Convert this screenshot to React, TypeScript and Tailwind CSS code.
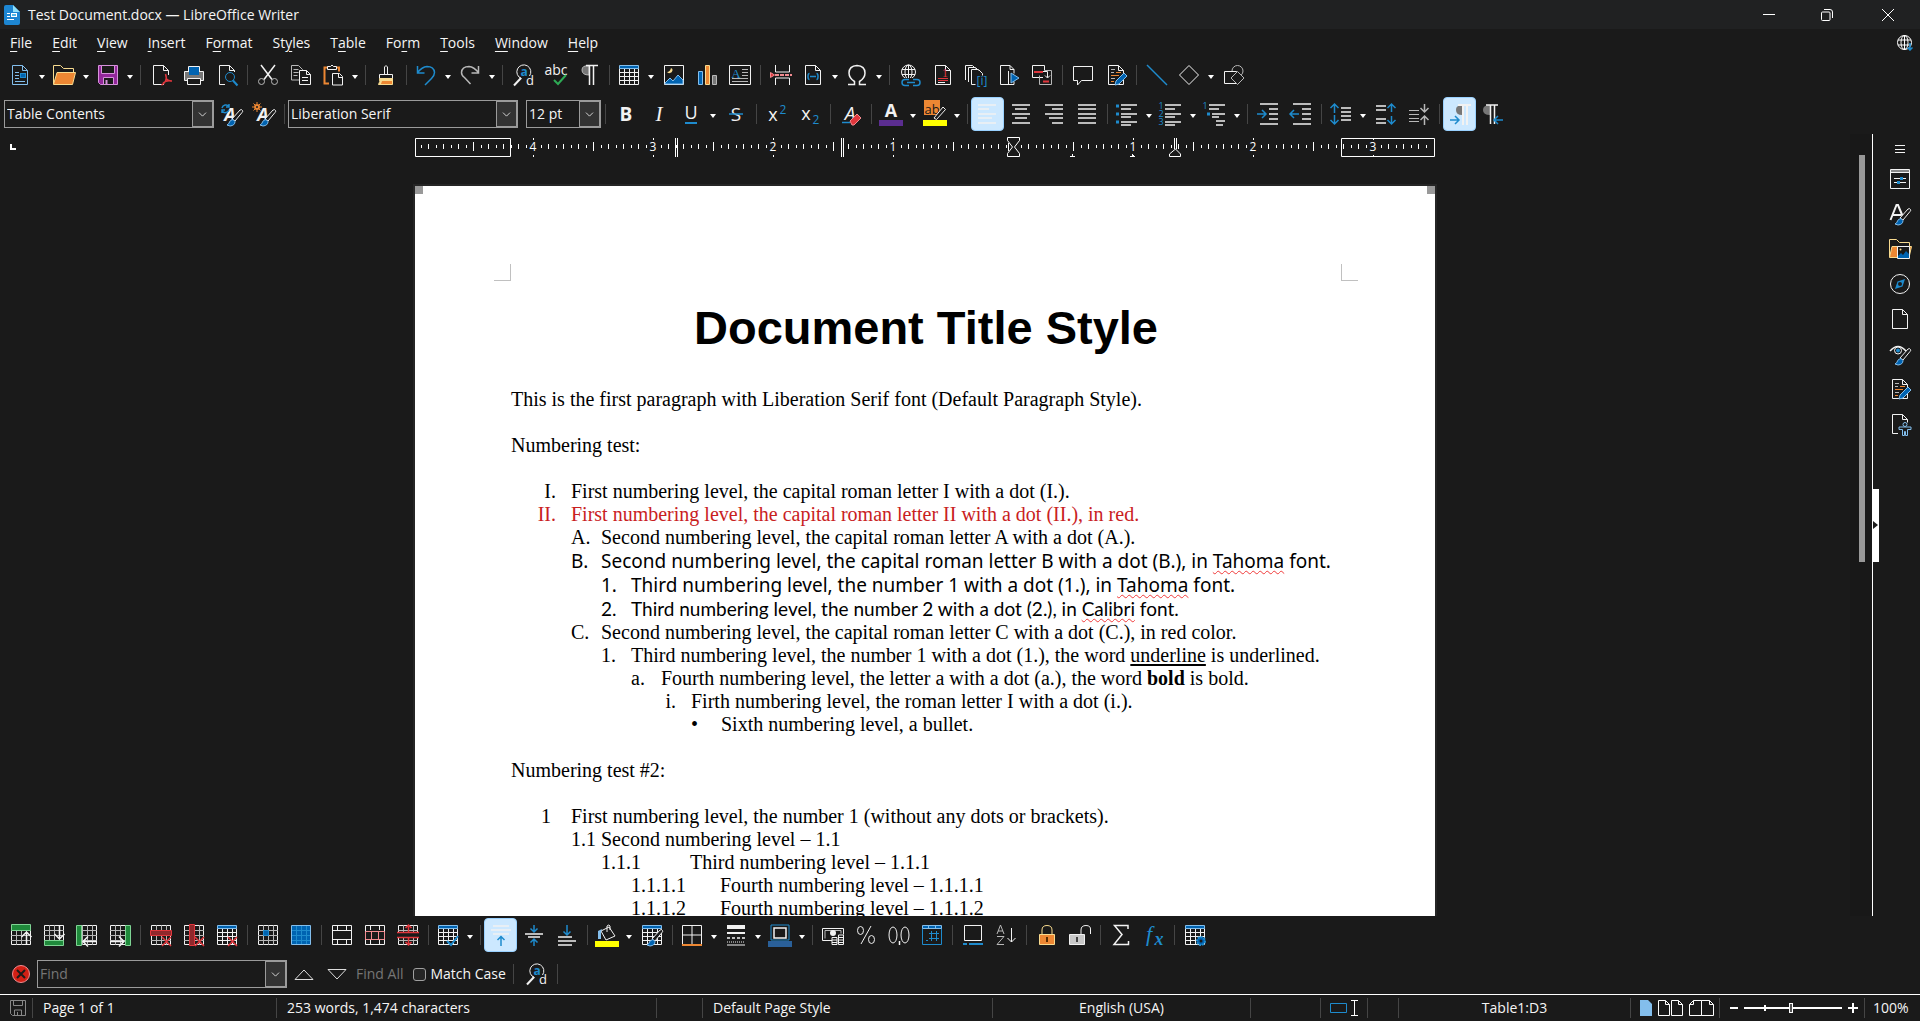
import type { ReactNode } from 'react';
import { ChevronDown } from 'lucide-react';
import clsx from 'clsx';

const W = '#f2f2f2';
const G = '#b8b8b8';
const BLUE = '#1e8bcd';
const DEEP = '#0063b1';
const SKY = '#83beec';
const ORANGE = '#ed8733';
const CREAM = '#f8db8f';
const RED = '#e0363c';
const PINK = '#f28b90';
const BG = '#1a1a1a';

// ---------- shared icon pieces ----------

const Doc = ({ c = W }: { c?: string }) => (
  <>
    <path d="M4.5 2.5h10l5 5v14h-15z" stroke={c} />
    <path d="M14.5 2.5v5h5" stroke={c} />
  </>
);

const Cells = () => (
  <>
    <path d="M2.5 2.5h19v19h-19z" stroke={W} />
    <path d="M2 7.5h20M2 12.5h20M2 17.5h20M7.5 2v20M12.5 2v20M17.5 2v20" stroke={G} />
  </>
);

const HeadTable = () => (
  <>
    <path d="M2.5 5.5h19v16h-19z" stroke={W} />
    <path d="M2 9.5h20M2 13.5h20M2 17.5h20M7.5 6v16M12.5 6v16M17.5 6v16" stroke={W} />
    <path d="M2.5 2.5h19v3h-19z" fill={DEEP} stroke={SKY} />
  </>
);

const Cross = () => <path d="M13 14l9 9M22 14l-9 9" stroke={RED} strokeWidth="1.5" />;

const Brush = () => (
  <>
    <path d="M12 16L20 7q2-1 2.5 0.5t-.5 2L15 18z" fill={BG} stroke={W} />
    <path d="M7 22q2-1 2.5-3t3.5-2.5l2 2q0 4-5 4.500z" fill={DEEP} stroke={SKY} />
  </>
);

const Pencil = () => <path d="M11 22l1-4 8-8 3 3-8 8z" fill={DEEP} stroke={SKY} />;

type TxtProps = { x: number; y: number; s: number; c?: string; b?: boolean; i?: boolean; serif?: boolean; children: ReactNode };

const Txt = ({ x, y, s, c = W, b, i, serif, children }: TxtProps) => (
  <text
    x={x}
    y={y}
    fontSize={s}
    fill={c}
    stroke="none"
    textAnchor="middle"
    fontWeight={b ? 700 : 400}
    fontStyle={i ? 'italic' : 'normal'}
    fontFamily={serif ? '"Liberation Serif", serif' : '"Open Sans", sans-serif'}
  >
    {children}
  </text>
);

const Lines = ({ rows }: { rows: [number, number, number][] }) => (
  <>
    {rows.map(([y, a, b]) => (
      <path key={y} d={`M${a} ${y}h${b - a}`} stroke={W} strokeWidth="1.5" />
    ))}
  </>
);

const icons: Record<string, ReactNode> = {
  new: (
    <>
      <Doc c={SKY} />
      <path d="M7 9.5h4M7 12.5h4M7 15.5h4M7 18.5h10" stroke={SKY} />
      <rect x="12.5" y="10.5" width="5" height="4" fill={DEEP} stroke={BLUE} />
    </>
  ),
  open: (
    <>
      <path d="M1.5 21v-18.5h7l3 3h10v4" stroke={CREAM} />
      <path d="M1.5 21.5L5 9.5h18.5L20.5 21.5z" fill={ORANGE} stroke={CREAM} />
    </>
  ),
  save: (
    <>
      <path d="M2.5 2.5h19v19h-17l-2-2z" fill="#93279b" stroke="#d692db" />
      <path d="M5.5 2.5h13v8h-13z" fill={BG} stroke="#d692db" />
      <path d="M7.5 14.5h10v7h-10z" fill={BG} stroke="#d692db" />
      <path d="M10.5 17v4.5" stroke="#d692db" strokeWidth="2" />
    </>
  ),
  pdf: (
    <>
      <Doc />
      <path d="M15 9v13h8V9z" fill={BG} />
      <path d="M19.5 8v4" stroke={W} />
      <path d="M16.5 11q1.5 4 0 7t-4 4M17 15q1 3 6 3M14 20q4-3 8-2" stroke={RED} strokeWidth="1.5" />
    </>
  ),
  print: (
    <>
      <path d="M6.5 10.5v-7h11v7" fill={DEEP} stroke={W} />
      <path d="M2.5 8.5h19v9h-19z" fill="#777" stroke={W} />
      <path d="M7 7h10v5H7z" fill={DEEP} />
      <path d="M5.5 15.5h13v6h-13z" fill={BG} stroke={W} />
    </>
  ),
  preview: (
    <>
      <Doc />
      <path d="M10 9h14v14h-14z" fill={BG} />
      <circle cx="15" cy="14" r="4.5" stroke={BLUE} />
      <path d="M18 17.5l4.5 5" stroke={BLUE} strokeWidth="2" />
    </>
  ),
  cut: (
    <>
      <path d="M5 2l11 14.5M19 2L8 16.5" stroke={W} strokeWidth="1.5" />
      <circle cx="5.5" cy="18.5" r="3" stroke={G} />
      <circle cx="18.5" cy="18.5" r="3" stroke={G} />
    </>
  ),
  copy: (
    <>
      <path d="M2.5 2.5h7l4 4v10.5h-11z" stroke={G} />
      <path d="M4.5 6.5h5M4.5 9.5h5M4.5 12.5h4" stroke={G} />
      <path d="M10.5 7.5h7l4 4v10h-11z" fill={BG} stroke={W} />
      <path d="M17.5 7.5v4h4M13 14.5h6M13 17.5h6" stroke={W} />
    </>
  ),
  paste: (
    <>
      <path d="M8 20.5H3.5v-16H18v4" stroke={ORANGE} strokeWidth="2" />
      <path d="M6.5 6.5v-3h3q1.5-3 3 0h3v3z" fill={BG} stroke={W} />
      <path d="M11.5 10.5h7l3 3v8.5h-10z" fill={BG} stroke={W} />
      <path d="M17.5 10.5v4h4" stroke={W} />
    </>
  ),
  clone: (
    <>
      <path d="M10.5 11.5V4q1.5-3 3 0v7.5" stroke={W} />
      <path d="M5.5 11.5h13v4h-13z" stroke={W} />
      <path d="M5.5 15.5h13v6h-14q2-3 1-6z" fill={CREAM} stroke={CREAM} />
      <path d="M8 18h10v3h-11z" fill={ORANGE} />
    </>
  ),
  undo: <path d="M3.5 3v7h7M3.5 9.5Q8 4 13 3.5q7 0 7.5 6 0 3-3 6L11 22" stroke={BLUE} strokeWidth="1.5" />,
  redo: <path d="M20.5 3v7h-7M20.5 9.5Q16 4 11 3.5q-7 0-7.5 6 0 3 3 5l6 6.5" stroke={G} strokeWidth="1.5" />,
  find: (
    <>
      <path d="M18.5 13a7 7 0 1 0-8 2.500" stroke={W} />
      <path d="M10 15l-7 7.5" stroke={W} strokeWidth="2" />
      <Txt x={13} y={13} s={12} c={BLUE} b>a</Txt>
      <Txt x={19} y={22} s={13}>d</Txt>
    </>
  ),
  spell: (
    <>
      <Txt x={12} y={12} s={14}>abc</Txt>
      <path d="M10 17l4 4 8-9" stroke="#2eaa55" strokeWidth="2" />
    </>
  ),
  marks: (
    <>
      <path d="M12 3v9q-7 0-7-5t7-4z" fill="#777" stroke={G} />
      <path d="M9 2.5h12M12.5 3v19M16.5 3v19" stroke={W} strokeWidth="1.5" />
    </>
  ),
  table: <HeadTable />,
  image: (
    <>
      <path d="M2.5 2.5h19v19h-19z" stroke={W} />
      <path d="M9 5q-1 4-4 4 1 1.5 3 1t2.500-2.500T9 5z" fill={CREAM} />
      <path d="M3 20l5-5 3 3 5-6 5 5v4H3z" fill={DEEP} stroke={SKY} />
    </>
  ),
  chart: (
    <>
      <path d="M3.5 8.5h4v13h-4z" fill={DEEP} stroke={SKY} />
      <path d="M10.5 2.5h4v19h-4z" fill={ORANGE} stroke={CREAM} />
      <path d="M17.5 12.5h4v9h-4z" fill="#777" stroke={G} />
    </>
  ),
  textbox: (
    <>
      <path d="M1.5 2.5h21v19h-21z" stroke={W} />
      <Txt x={8} y={15} s={13} c={BLUE} serif>A</Txt>
      <path d="M14 6.5h6M14 9.5h6M14 12.5h6M4 15.5h16M4 18.5h16" stroke={G} />
    </>
  ),
  pagebreak: (
    <>
      <path d="M6.5 2v7h14V2M6.5 22v-7h14v7" stroke={W} />
      <path d="M6 12h17" stroke={PINK} strokeWidth="2" strokeDasharray="4 1" />
      <path d="M1.5 9.5v5l4-2.5z" fill={RED} stroke={PINK} />
    </>
  ),
  field: (
    <>
      <Doc />
      <path d="M8.5 10.5q-1.5 0-1.5 3t1.5 3M15.5 10.5q1.5 0 1.5 3t-1.5 3M9 13.5h6" stroke={BLUE} strokeWidth="1.5" />
    </>
  ),
  omega: <path d="M3 21.5h6.5v-3Q4 15 4 10q0-7 8-7.5 8 .5 8 7.500 0 5-5.5 8.500v3H21" stroke={W} strokeWidth="1.5" />,
  link: (
    <>
      <circle cx="10.5" cy="9" r="7" stroke={W} />
      <path d="M4 6.5h13M4 11.5h13M10.5 2v14" stroke={W} />
      <ellipse cx="10.5" cy="9" rx="3.5" ry="7" stroke={W} />
      <path d="M3 15h20v8H3z" fill={BG} />
      <path d="M11 16.5H7q-3 0-3 3t3 3h4M15 16.5h4q3 0 3 3t-3 3h-4M9 19.5h8" stroke={BLUE} strokeWidth="1.5" />
    </>
  ),
  footnote: (
    <>
      <Doc />
      <Txt x={14} y={14} s={12} c={RED} serif>1</Txt>
      <path d="M7 15.5h10M7 17.5h10" stroke={RED} />
      <path d="M7 19.5h7" stroke={W} />
    </>
  ),
  endnote: (
    <>
      <path d="M1.5 17V2.5h7l3 3M4.5 19V4.5h7l3 3M7.5 21.5v-15h7l4 4v2M7.5 21.5h4" stroke={W} />
      <Txt x={18} y={22} s={12} c={BLUE}>[i]</Txt>
    </>
  ),
  bookmark: (
    <>
      <path d="M13 2.5H3.5v19H17v-3M13 2.5l4 4v4M13 2.5v4h4" stroke={W} />
      <path d="M11.5 8v14" stroke={W} />
      <path d="M14 10l8 5-8 5z" fill={DEEP} stroke={SKY} />
    </>
  ),
  crossref: (
    <>
      <path d="M13 14.5H2.5v-12h12v5" stroke={W} />
      <path d="M9.5 12.5v9h12v-14h-7" stroke={G} />
      <path d="M4 9h9" stroke={RED} strokeWidth="2" />
      <path d="M13 8.5h4.5v6M15 12.5l2.5 2.500 2.500-2.500" stroke={W} />
      <path d="M13 18.5h6" stroke={RED} strokeWidth="2" />
    </>
  ),
  comment: <path d="M2.5 3.5h19v14h-11l-4 4.5v-4.5h-4z" stroke={W} />,
  track: (
    <>
      <Doc />
      <path d="M7 6.5h4M7 9.5h3M7 15.5h4" stroke={G} />
      <path d="M12 9.5h5M7 12.5h8M7 18.5h3" stroke={ORANGE} />
      <Pencil />
    </>
  ),
  line: <path d="M2 2l20 20" stroke={BLUE} strokeWidth="1.5" />,
  diamond: <path d="M12 2.5l9.5 9.5-9.5 9.5L2.5 12z" stroke={W} />,
  shapes: (
    <>
      <circle cx="15.5" cy="8" r="5.5" stroke={G} />
      <path d="M2.5 8.5h12v12h-12z" fill={BG} stroke={W} />
      <path d="M15.5 8.5l6.5 6.5-6.5 6.5-6.5-6.5z" fill={BG} stroke={G} />
    </>
  ),
  updstyle: (
    <>
      <Txt x={11} y={19} s={18} b i>A</Txt>
      <path d="M10 4.500A4 4 0 0 0 3 6M10 2v3H7M3 9a4 4 0 0 0 7-1M3 11V8h3" stroke={BLUE} strokeWidth="1.5" />
      <g transform="translate(1 1)">
        <Brush />
      </g>
    </>
  ),
  newstyle: (
    <>
      <Txt x={11} y={19} s={18} b i>A</Txt>
      <circle cx="5" cy="5" r="2" stroke={ORANGE} strokeWidth="2" />
      <path d="M5 0v2M5 8v2M0 5h2M8 5h2M1.5 1.5l1.5 1.5M7 7l1.5 1.5M8.5 1.5L7 3M3 7L1.5 8.500" stroke={ORANGE} />
      <g transform="translate(1 1)">
        <Brush />
      </g>
    </>
  ),
  bold: <Txt x={12} y={19} s={19} b>B</Txt>,
  italic: <Txt x={12} y={19} s={21} i serif>I</Txt>,
  underline: (
    <>
      <Txt x={12} y={17} s={18}>U</Txt>
      <path d="M6 21h12" stroke={BLUE} strokeWidth="2" />
    </>
  ),
  strike: (
    <>
      <Txt x={12} y={19} s={19}>S</Txt>
      <path d="M5 12h14" stroke={BLUE} strokeWidth="1.5" />
    </>
  ),
  sup: (
    <>
      <Txt x={8} y={19} s={18}>x</Txt>
      <Txt x={18} y={12} s={12} c={BLUE}>2</Txt>
    </>
  ),
  sub: (
    <>
      <Txt x={8} y={18} s={18}>x</Txt>
      <Txt x={18} y={22} s={12} c={BLUE}>2</Txt>
    </>
  ),
  clear: (
    <>
      <Txt x={11} y={18} s={19} i>A</Txt>
      <path d="M3 20.5h8" stroke={BLUE} strokeWidth="1.5" />
      <path d="M11 19l7-7 4 4-7 7h-2z" fill={RED} stroke={PINK} />
    </>
  ),
  fontcolor: (
    <>
      <Txt x={12} y={15} s={18} b>A</Txt>
      <path d="M0 18h24v6H0z" fill="#5b2d90" />
    </>
  ),
  highlight: (
    <>
      <path d="M1-2h16v15H1z" fill={ORANGE} />
      <Txt x={9} y={12} s={13} c={BG}>ab</Txt>
      <path d="M11 16l9-11 2.5 2.500-9 10z" fill={BG} stroke={W} />
      <path d="M0 18h24v6H0z" fill="#ff0" />
    </>
  ),
  left: <Lines rows={[[3, 2, 20], [7, 2, 13], [12, 2, 20], [16, 2, 16], [21, 2, 20]]} />,
  center: <Lines rows={[[3, 3, 21], [7, 6, 18], [12, 3, 21], [16, 6, 18], [21, 3, 21]]} />,
  right: <Lines rows={[[3, 3, 21], [7, 10, 21], [12, 3, 21], [16, 7, 21], [21, 10, 21]]} />,
  justify: <Lines rows={[[3, 3, 21], [7, 3, 21], [12, 3, 21], [16, 3, 21], [21, 3, 21]]} />,
  bullets: (
    <>
      <Lines rows={[[3, 6, 22], [7, 6, 16], [12, 6, 22], [15, 6, 16], [20, 6, 22], [23, 6, 16]]} />
      <path d="M1 4h3M1 12h3M1 20h3" stroke={BLUE} strokeWidth="3" />
    </>
  ),
  numbers: (
    <>
      <Lines rows={[[3, 6, 22], [7, 6, 16], [12, 6, 22], [15, 6, 16], [20, 6, 22], [23, 6, 16]]} />
      <Txt x={2} y={7} s={9} c={BLUE}>1</Txt>
      <Txt x={2} y={15} s={9} c={BLUE}>2</Txt>
      <Txt x={2} y={23} s={9} c={BLUE}>3</Txt>
    </>
  ),
  outline: (
    <>
      <Lines rows={[[3, 6, 22], [7, 6, 16], [12, 9, 22], [15, 9, 16], [19, 13, 22], [23, 13, 20]]} />
      <Txt x={2} y={7} s={9} c={BLUE}>1</Txt>
      <path d="M4 12h3" stroke={BLUE} strokeWidth="3" />
    </>
  ),
  indent: (
    <>
      <Lines rows={[[2, 4, 22], [7, 13, 22], [12, 13, 22], [17, 13, 22], [22, 4, 22]]} />
      <path d="M1 12h9M6 8l4 4-4 4" stroke={BLUE} strokeWidth="1.5" />
    </>
  ),
  outdent: (
    <>
      <Lines rows={[[2, 4, 22], [7, 13, 22], [12, 13, 22], [17, 13, 22], [22, 4, 22]]} />
      <path d="M1 12h9M5 8l-4 4 4 4" stroke={BLUE} strokeWidth="1.5" />
    </>
  ),
  spacing: (
    <>
      <Lines rows={[[6, 12, 22], [10, 12, 22], [14, 12, 22], [18, 12, 22]]} />
      <path d="M5.5 2v9M1.5 6l4-4 4 4M5.5 13v9M1.5 18l4 4 4-4" stroke={BLUE} strokeWidth="1.5" />
    </>
  ),
  parainc: (
    <>
      <Lines rows={[[4, 2, 12], [8, 2, 12], [17, 2, 12], [21, 2, 12]]} />
      <path d="M17.5 2v8M13.5 6l4-4 4 4M17.5 14v8M13.5 18l4 4 4-4" stroke={BLUE} strokeWidth="1.5" />
    </>
  ),
  paradec: (
    <>
      <path d="M2 8.5h10M2 12.5h10M2 16.5h10M2 19.5h10" stroke={G} />
      <path d="M17.5 2v8M13.5 6l4 4 4-4M17.5 14v9M13.5 18l4-4 4 4" stroke={G} strokeWidth="1.5" />
    </>
  ),
  ltr: (
    <>
      <path d="M14 4v9q-6 0-6-5t6-4z" fill="#777" />
      <path d="M10 3h13M15 3v20M19 3v20" stroke={W} strokeWidth="2" />
      <path d="M2 18h9M7 14l4 4-4 4" stroke={BLUE} strokeWidth="1.5" />
    </>
  ),
  rtl: (
    <>
      <path d="M9 3v10q-7 0-7-5t7-5z" fill="#777" />
      <path d="M5 3h12M9.5 3v19M13.5 3v19" stroke={W} strokeWidth="1.5" />
      <path d="M13 18h9M17 14l-4 4 4 4" stroke={BLUE} strokeWidth="1.5" />
    </>
  ),

  // table toolbar
  rowabove: (
    <>
      <Cells />
      <path d="M2.5 1.5h19v6h-19z" fill="#1f8a3b" stroke="#7fd494" />
      <path d="M17.5 22V9M12.5 14l5-5 5 5" stroke={W} strokeWidth="1.5" />
    </>
  ),
  rowbelow: (
    <>
      <Cells />
      <path d="M2.5 17.5h19v5h-19z" fill="#1f8a3b" stroke="#7fd494" />
      <path d="M17.5 2v14M12.5 11l5 5 5-5" stroke={W} strokeWidth="1.5" />
    </>
  ),
  colbefore: (
    <>
      <Cells />
      <path d="M1.5 2.5h5v20h-5z" fill="#1f8a3b" stroke="#7fd494" />
      <path d="M22 18.5H8M13 13.5l-5 5 5 5" stroke={W} strokeWidth="1.5" />
    </>
  ),
  colafter: (
    <>
      <Cells />
      <path d="M17.5 2.5h5v20h-5z" fill="#1f8a3b" stroke="#7fd494" />
      <path d="M2 18.5h14M11 13.5l5 5-5 5" stroke={W} strokeWidth="1.5" />
    </>
  ),
  delrow: (
    <>
      <Cells />
      <path d="M1.5 7.5h21v5h-21z" fill="#8f282c" stroke={RED} />
      <Cross />
    </>
  ),
  delcol: (
    <>
      <Cells />
      <path d="M7.5 1.5h5v21h-5z" fill="#8f282c" stroke={RED} />
      <Cross />
    </>
  ),
  deltable: (
    <>
      <HeadTable />
      <Cross />
    </>
  ),
  selcell: (
    <>
      <Cells />
      <path d="M7.5 7.5h5v5h-5z" fill={DEEP} stroke={BLUE} />
    </>
  ),
  seltable: (
    <>
      <path d="M2.5 2.5h19v19h-19z" fill={DEEP} stroke={SKY} />
      <path d="M3 7.5h18M3 12.5h18M3 17.5h18M7.5 3v18M12.5 3v18M17.5 3v18" stroke={BLUE} />
    </>
  ),
  merge: (
    <>
      <path d="M2.5 2.5h19v19h-19z" stroke={W} />
      <path d="M2 7.5h20M2 16.5h20M7.5 2v5M16.5 2v5M7.5 17v5M16.5 17v5" stroke={W} />
    </>
  ),
  splitcell: (
    <>
      <path d="M2.5 2.5h19v19h-19z" stroke={W} />
      <path d="M7.5 2v5M16.5 2v5M7.5 17v5M16.5 17v5" stroke={W} />
      <path d="M2.5 8.5h19v8h-19zM8.5 8v8M15.5 8v8" stroke={PINK} />
    </>
  ),
  splittable: (
    <>
      <Cells />
      <path d="M1 9h22v6H1z" fill={BG} />
      <path d="M1 9.5h22M1 14.5h22M12.5 9V2M9.5 5l3-3 3 3M12.5 15v7M9.5 19l3 3 3-3" stroke={RED} strokeWidth="1.5" />
    </>
  ),
  optimal: (
    <>
      <HeadTable />
      <path d="M11 18l4 4 7-9" stroke={BLUE} strokeWidth="2" />
    </>
  ),
  aligntop: (
    <>
      <Lines rows={[[3, 4, 20], [7, 2, 22], [11, 4, 20]]} />
      <path d="M12 23V13M8.5 17l3.5-3.5 3.5 3.5" stroke={BLUE} strokeWidth="1.5" />
    </>
  ),
  alignmid: (
    <>
      <Lines rows={[[11, 3, 21], [14, 6, 18]]} />
      <path d="M12 2v7M8.5 5.5l3.5 3.5 3.5-3.5M12 23v-7M8.5 19.5l3.5-3.5 3.5 3.5" stroke={BLUE} strokeWidth="1.5" />
    </>
  ),
  alignbot: (
    <>
      <Lines rows={[[14, 3, 17], [18, 3, 21], [22, 3, 17]]} />
      <path d="M12 2v10M8.5 8.5l3.5 3.5 3.5-3.5" stroke={BLUE} strokeWidth="1.5" />
    </>
  ),
  fill: (
    <>
      <path d="M6 8l8-4 6 9-9 4z" stroke={W} />
      <path d="M12 9V3q2-2 3 0v4" stroke={W} />
      <path d="M3 16V8l4-2-1 3v7z" fill={SKY} />
      <path d="M0 18h24v6H0z" fill="#ff0" />
    </>
  ),
  autoformat: (
    <>
      <HeadTable />
      <Brush />
    </>
  ),
  borders: (
    <>
      <path d="M2.5 21.5v-19h19v19M12 3v18M3 12h18" stroke={W} />
      <path d="M2 22h20" stroke={ORANGE} strokeWidth="2" />
    </>
  ),
  linestyle: (
    <>
      <path d="M3 4h18" stroke={W} strokeWidth="4" />
      <path d="M3 10h18" stroke={W} strokeWidth="2" />
      <path d="M3 15h18" stroke={W} strokeDasharray="3 2" strokeWidth="1.5" />
      <path d="M3 19h18" stroke={W} strokeDasharray="1 1" />
      <path d="M3 22h18" stroke={W} />
    </>
  ),
  bordercolor: (
    <>
      <path d="M3 2h18v15H3z" stroke={BLUE} />
      <path d="M6 5h12v10H6z" stroke={W} strokeWidth="1.5" />
      <path d="M0 18h24v6H0z" fill="#2a6099" />
    </>
  ),
  currency: (
    <>
      <path d="M11 17.5H1.5v-12h21v6" stroke={W} />
      <path d="M4 15.5v-8h16v3" stroke={G} />
      <circle cx="12" cy="10" r="3" fill={W} />
      <path d="M11 14.5h5v7h-5zM17.5 12h5v9.5h-5zM11 17h5M11 19.5h5M17.5 14.5h5M17.5 17h5M17.5 19.5h5" fill={BG} stroke={W} />
    </>
  ),
  percent: (
    <>
      <ellipse cx="6.5" cy="7.5" rx="3" ry="4" stroke={W} />
      <ellipse cx="17.5" cy="16.5" rx="3" ry="4" stroke={W} />
      <path d="M17 3L7 21" stroke={W} />
    </>
  ),
  decimal: (
    <>
      <ellipse cx="6" cy="12" rx="4" ry="8" stroke={W} />
      <ellipse cx="18" cy="12" rx="4" ry="8" stroke={W} />
      <path d="M12.5 18v4" stroke={W} strokeWidth="1.5" />
    </>
  ),
  number: (
    <>
      <path d="M2.5 5.5h19v16h-19z" stroke={BLUE} />
      <path d="M2.5 2.5h19v3h-19zM8.5 3v2M15.5 3v2" fill={DEEP} stroke={SKY} />
      <path d="M11.5 8v10M16.5 8v10M9 10.5h10M9 15.5h10M6 17.5h2" stroke={BLUE} />
    </>
  ),
  caption: (
    <>
      <path d="M3.5 2.5h17v15h-17z" stroke={W} />
      <path d="M2 21h4M8 21h14" stroke={BLUE} strokeWidth="2" />
    </>
  ),
  sort: (
    <>
      <path d="M3 11l3.5-9 3.500 9M4 8h5M3 13.5h7L3 21.500h7" stroke={G} />
      <path d="M17.5 5v14M13.5 15l4 4 4-4" stroke={W} />
    </>
  ),
  lock: (
    <>
      <path d="M7 12V7q0-4.5 5-4.5T17 7v5" stroke={CREAM} />
      <path d="M4.5 11.5h15v10h-15z" fill={ORANGE} stroke={CREAM} />
      <path d="M12 14v5" stroke="#5a2d00" strokeWidth="2" />
    </>
  ),
  unlock: (
    <>
      <path d="M13 12V7q0-4.5 5-4.5T22.5 7v4" stroke={W} />
      <path d="M1.5 11.5h15v10h-15z" fill="#c8c8c8" stroke={W} />
      <path d="M9 14v5" stroke="#444" strokeWidth="2" />
    </>
  ),
  sum: <path d="M19 6V2.5H5.5l7.5 9-8 10h14.5V18" stroke={W} strokeWidth="1.5" />,
  fx: (
    <>
      <Txt x={7} y={18} s={22} c={BLUE} i serif>f</Txt>
      <Txt x={17} y={22} s={18} c={BLUE} i serif b>x</Txt>
    </>
  ),
  props: (
    <>
      <HeadTable />
      <circle cx="18" cy="18" r="4" fill={DEEP} stroke={BLUE} strokeWidth="2" strokeDasharray="2 1" />
      <circle cx="18" cy="18" r="1.5" fill={BG} />
    </>
  ),

  // sidebar decks
  menu: <path d="M7 8.5h10M7 12.5h10M7 15.5h10" stroke={W} />,
  properties: (
    <>
      <path d="M2.5 2.5h19v19h-19z" stroke={W} />
      <path d="M3 4h18" stroke="#888" strokeWidth="2" />
      <path d="M2 5.5h20M6 11.5h12M6 15.5h12" stroke={W} />
      <path d="M12 11.5h3M9 15.5h3" stroke={BLUE} strokeWidth="3" />
    </>
  ),
  styles: (
    <>
      <path d="M2.5 18L8.5 3h1.5l5 12M5 13h8" stroke={W} strokeWidth="2" />
      <Brush />
    </>
  ),
  gallery: (
    <>
      <path d="M1.5 20V2.5h7l3 3h10v4" stroke={CREAM} />
      <path d="M1.5 20.5L4 9.5h19.5L21 20.5z" fill={ORANGE} stroke={CREAM} />
      <path d="M9.5 9.5h12v12h-12z" fill={BG} stroke={W} />
      <path d="M10 19l3-3 2 2 3-4 3 3v4H10z" fill={DEEP} />
      <circle cx="12.5" cy="12.5" r="1" fill={CREAM} />
    </>
  ),
  navigator: (
    <>
      <circle cx="12" cy="12" r="9.5" stroke={W} />
      <path d="M17 7l-2.5 7.5L7 17l2.5-7.5z" fill={BLUE} />
      <circle cx="12" cy="12" r="2" fill={BG} />
    </>
  ),
  page: <Doc />,
  inspector: (
    <>
      <path d="M2 9q8-9 16 0" stroke={W} strokeWidth="1.5" />
      <circle cx="10" cy="8.5" r="3.5" fill={BG} stroke={W} />
      <circle cx="10" cy="8.5" r="2" fill={BLUE} />
      <Brush />
    </>
  ),
  access: (
    <>
      <path d="M10 21.5H4.5v-19h10l5 5v3M14.5 2.5v5h5" stroke={W} />
      <circle cx="17" cy="12.5" r="2" fill={BG} stroke={SKY} />
      <path d="M11 15h12v2.5h-3.500v6h-2v-4h-1v4h-2v-6H11z" fill={BG} stroke={SKY} />
    </>
  ),
};

function Icon({ name }: { name: string }) {
  return (
    <svg width="24" height="24" viewBox="0 0 24 24" fill="none" aria-hidden="true" className="shrink-0 overflow-visible">
      {icons[name]}
    </svg>
  );
}

// ---------- toolbar ----------

type Item = { id: string; label: string; split?: boolean; on?: boolean } | '|';

const t = (id: string, label: string): Item => ({ id, label });
const s = (id: string, label: string): Item => ({ id, label, split: true });

const standardBar: Item[] = [
  s('new', 'New'), s('open', 'Open'), s('save', 'Save'), '|',
  t('pdf', 'Export as PDF'), t('print', 'Print'), t('preview', 'Print Preview'), '|',
  t('cut', 'Cut'), t('copy', 'Copy'), s('paste', 'Paste'), '|',
  t('clone', 'Clone Formatting'), '|',
  s('undo', 'Undo'), s('redo', 'Redo'), '|',
  t('find', 'Find & Replace'), t('spell', 'Spelling'), t('marks', 'Formatting Marks'), '|',
  s('table', 'Insert Table'), t('image', 'Insert Image'), t('chart', 'Insert Chart'), t('textbox', 'Insert Text Box'), '|',
  t('pagebreak', 'Page Break'), s('field', 'Insert Field'), s('omega', 'Special Character'), '|',
  t('link', 'Hyperlink'), t('footnote', 'Footnote'), t('endnote', 'Endnote'), t('bookmark', 'Bookmark'), t('crossref', 'Cross-reference'), '|',
  t('comment', 'Comment'), t('track', 'Track Changes'), '|',
  t('line', 'Line'), s('diamond', 'Basic Shapes'), t('shapes', 'Draw Functions'),
];

const formatBar: Item[] = [
  '|', t('bold', 'Bold'), t('italic', 'Italic'), s('underline', 'Underline'), t('strike', 'Strikethrough'), '|',
  t('sup', 'Superscript'), t('sub', 'Subscript'), '|',
  t('clear', 'Clear Formatting'), '|',
  s('fontcolor', 'Font Color'), s('highlight', 'Highlighting'), '|',
  { id: 'left', label: 'Align Left', on: true }, t('center', 'Center'), t('right', 'Align Right'), t('justify', 'Justified'), '|',
  s('bullets', 'Bullets'), s('numbers', 'Numbering'), s('outline', 'Outline'), '|',
  t('indent', 'Increase Indent'), t('outdent', 'Decrease Indent'), '|',
  s('spacing', 'Line Spacing'), t('parainc', 'Increase Paragraph Spacing'), t('paradec', 'Decrease Paragraph Spacing'), '|',
  { id: 'ltr', label: 'Left-To-Right', on: true }, t('rtl', 'Right-To-Left'),
];

const tableBar: Item[] = [
  t('rowabove', 'Rows Above'), t('rowbelow', 'Rows Below'), t('colbefore', 'Columns Before'), t('colafter', 'Columns After'), '|',
  t('delrow', 'Delete Rows'), t('delcol', 'Delete Columns'), t('deltable', 'Delete Table'), '|',
  t('selcell', 'Select Cell'), t('seltable', 'Select Table'), '|',
  t('merge', 'Merge Cells'), t('splitcell', 'Split Cells'), t('splittable', 'Split Table'), '|',
  s('optimal', 'Optimize Size'), '|',
  { id: 'aligntop', label: 'Align Top', on: true }, t('alignmid', 'Center Vertically'), t('alignbot', 'Align Bottom'), '|',
  s('fill', 'Background Color'), t('autoformat', 'AutoFormat Styles'), '|',
  s('borders', 'Borders'), s('linestyle', 'Border Style'), s('bordercolor', 'Border Color'), '|',
  t('currency', 'Currency'), t('percent', 'Percent'), t('decimal', 'Decimal'), t('number', 'Number Format'), '|',
  t('caption', 'Caption'), t('sort', 'Sort'), '|',
  t('lock', 'Protect Cells'), t('unlock', 'Unprotect Cells'), '|',
  t('sum', 'Sum'), t('fx', 'Formula'), '|',
  t('props', 'Table Properties'),
];

function Sep() {
  return (
    <span className="flex w-2 shrink-0 justify-center">
      <span className="h-5 w-px bg-[#454545]" />
    </span>
  );
}

function ToolItems({ items }: { items: Item[] }) {
  return (
    <>
      {items.map((item, i) => {
        if (item === '|') return <Sep key={i} />;
        if (item.split) {
          return (
            <span key={item.id} className="flex shrink-0">
              <button type="button" aria-label={item.label} className="flex h-[34px] w-[31px] items-center justify-center">
                <Icon name={item.id} />
              </button>
              <button type="button" aria-label={`${item.label} options`} className="flex h-[34px] w-[13px] items-center justify-center pt-1">
                <svg width="6" height="4" viewBox="0 0 6 4" fill="#fff" aria-hidden="true">
                  <path d="M0 0h6L3 4z" />
                </svg>
              </button>
            </span>
          );
        }
        return (
          <button
            key={item.id}
            type="button"
            aria-label={item.label}
            className={clsx(
              'flex h-[34px] w-[33px] shrink-0 items-center justify-center',
              item.on && 'rounded-sm border border-[#99d1ff] bg-[#cce8ff]',
            )}
          >
            <Icon name={item.id} />
          </button>
        );
      })}
    </>
  );
}

function Combo({ label, value, className }: { label: string; value: string; className: string }) {
  return (
    <span className={clsx('relative flex h-7 shrink-0 border border-[#9b9b9b]', className)}>
      <select aria-label={label} className="w-full appearance-none bg-transparent pl-0.5 text-sm outline-none">
        <option>{value}</option>
      </select>
      <span className="pointer-events-none absolute inset-y-0 right-0 flex w-[21px] items-center justify-center border border-[#9b9b9b] bg-[#333]">
        <ChevronDown size={13} strokeWidth={1.5} />
      </span>
    </span>
  );
}

// [before, mnemonic, after]
const menus: [string, string, string][] = [
  ['', 'F', 'ile'],
  ['', 'E', 'dit'],
  ['', 'V', 'iew'],
  ['', 'I', 'nsert'],
  ['F', 'o', 'rmat'],
  ['St', 'y', 'les'],
  ['T', 'a', 'ble'],
  ['Fo', 'r', 'm'],
  ['', 'T', 'ools'],
  ['', 'W', 'indow'],
  ['', 'H', 'elp'],
];

// ---------- ruler ----------

const ZERO = 598; // ruler origin, 120px per inch

function Ruler() {
  const ticks: ReactNode[] = [];
  for (let n = -79; n <= 55; n++) {
    if (n % 16 === 0) continue;
    const x = Math.round(ZERO + n * 7.5) + 0.5;
    const h = n % 8 === 0 ? 5 : n % 2 === 0 ? 3 : 2;
    ticks.push(<path key={n} d={`M${x} ${13 - h}v${h * 2 - 1}`} stroke="#fff" />);
  }
  return (
    <svg width="1020" height="26" viewBox="0 0 1020 26" fill="none" className="shrink-0" aria-label="Horizontal ruler">
      {ticks}
      {[-4, -3, -2, -1, 1, 2, 3].map((n) => (
        <g key={n}>
          <path d={`M${ZERO + n * 120 + 0.5} 4v2M${ZERO + n * 120 + 0.5} 21v2`} stroke="#fff" />
          <text x={ZERO + n * 120} y="17" textAnchor="middle" fontSize="12" fill="#fff" fontFamily='"Open Sans", sans-serif'>
            {Math.abs(n)}
          </text>
        </g>
      ))}
      <path d="M0.5 4.5h95v18h-95zM926.5 4.5h93v18h-93z" stroke="#fff" />
      <path d="M260.5 4v19M262.5 4v19M426.5 4v19M428.5 4v19M759.5 4v11M761.5 4v11" stroke="#fff" />
      <path d="M592.5 3.5h12v3l-5 6.5 5 6.5v3h-12v-3l5-6.5-5-6.5z" fill={BG} stroke="#fff" />
      <path d="M593.5 9v8M657.5 20v3M655 22.5h5M717.5 20v3M715 22.5h5" stroke="#fff" />
      <path d="M760.5 15l5 5v2.5h-11v-2.5z" fill={BG} stroke="#fff" />
    </svg>
  );
}

// ---------- document ----------

type Row = { m: string; place: string; font?: string; body: ReactNode };

const Misspelt = ({ children }: { children: ReactNode }) => (
  <span className="underline decoration-[#f03a3a] decoration-wavy decoration-1 underline-offset-2 [text-decoration-skip-ink:none]">{children}</span>
);

const TAHOMA = 'font-["Noto_Sans","Open_Sans",sans-serif] text-[19px] leading-6';
const CALIBRI = 'font-[Lato,sans-serif] text-[19px] leading-6';

const level1 = 'mr-[15px] w-[45px] text-right';
const level2 = 'ml-[60px] w-[30px]';
const level3 = 'ml-[90px] w-[30px]';

const firstList: Row[] = [
  { m: 'I.', place: level1, body: 'First numbering level, the capital roman letter I with a dot (I.).' },
  { m: 'II.', place: level1, font: 'text-[#c9211e]', body: 'First numbering level, the capital roman letter II with a dot (II.), in red.' },
  { m: 'A.', place: level2, body: 'Second numbering level, the capital roman letter A with a dot (A.).' },
  { m: 'B.', place: level2, font: TAHOMA, body: <>Second numbering level, the capital roman letter B with a dot (B.), in <Misspelt>Tahoma</Misspelt> font.</> },
  { m: '1.', place: level3, font: TAHOMA, body: <>Third numbering level, the number 1 with a dot (1.), in <Misspelt>Tahoma</Misspelt> font.</> },
  { m: '2.', place: level3, font: CALIBRI, body: <>Third numbering level, the number 2 with a dot (2.), in <Misspelt>Calibri</Misspelt> font.</> },
  { m: 'C.', place: level2, body: 'Second numbering level, the capital roman letter C with a dot (C.), in red color.' },
  { m: '1.', place: level3, body: <>Third numbering level, the number 1 with a dot (1.), the word <u className="underline-offset-2">underline</u> is underlined.</> },
  { m: 'a.', place: 'ml-[120px] w-[30px]', body: <>Fourth numbering level, the letter a with a dot (a.), the word <b>bold</b> is bold.</> },
  { m: 'i.', place: 'ml-[120px] mr-[15px] w-[45px] text-right', body: 'Firth numbering level, the roman letter I with a dot (i.).' },
  { m: '•', place: 'ml-[180px] w-[30px]', body: 'Sixth numbering level, a bullet.' },
];

const secondList: Row[] = [
  { m: '1', place: 'ml-[30px] w-[30px]', body: 'First numbering level, the number 1 (without any dots or brackets).' },
  { m: '1.1', place: level2, body: 'Second numbering level – 1.1' },
  { m: '1.1.1', place: 'ml-[90px] w-[89px]', body: 'Third numbering level – 1.1.1' },
  { m: '1.1.1.1', place: 'ml-[120px] w-[89px]', body: 'Fourth numbering level – 1.1.1.1' },
  { m: '1.1.1.2', place: 'ml-[120px] w-[89px]', body: 'Fourth numbering level – 1.1.1.2' },
];

function NumberedList({ rows }: { rows: Row[] }) {
  return (
    <ol className="mb-[23px]">
      {rows.map((row, i) => (
        <li key={i} className={clsx('flex whitespace-nowrap', row.font)}>
          <span className={clsx('shrink-0', row.place)}>{row.m}</span>
          <span>{row.body}</span>
        </li>
      ))}
    </ol>
  );
}

function Page() {
  return (
    <article className='relative mx-auto w-[1020px] bg-white pl-24 pr-[94px] pt-[115px] font-["Liberation_Serif",serif] text-[20px] leading-[23px] text-black ring-2 ring-[#252525]'>
      <span className="absolute left-0 top-0 h-2 w-2 bg-[#999]" />
      <span className="absolute right-0 top-0 h-2 w-2 bg-[#999]" />
      <span className="absolute left-[79px] top-[78px] h-[17px] w-[17px] border-b border-r border-[#c0c0c0]" />
      <span className="absolute right-[77px] top-[78px] h-[17px] w-[17px] border-b border-l border-[#c0c0c0]" />
      <h1 className='mb-[33px] text-center font-["Liberation_Sans",sans-serif] text-[47px] font-bold leading-[54px]'>Document Title Style</h1>
      <p className="mb-[23px]">This is the first paragraph with Liberation Serif font (Default Paragraph Style).</p>
      <p className="mb-[23px]">Numbering test:</p>
      <NumberedList rows={firstList} />
      <p className="mb-[23px]">Numbering test #2:</p>
      <NumberedList rows={secondList} />
    </article>
  );
}

const decks: [string, string][] = [
  ['properties', 'Properties'],
  ['styles', 'Styles'],
  ['gallery', 'Gallery'],
  ['navigator', 'Navigator'],
  ['page', 'Page'],
  ['inspector', 'Style Inspector'],
  ['track', 'Manage Changes'],
  ['access', 'Accessibility Check'],
];

function StatusBar() {
  const cell = 'flex h-5 items-center border-l border-[#454545]';
  return (
    <footer className="grid h-[27px] shrink-0 grid-cols-[32px_244fr_380fr_46px_290fr_258fr_70px_47px_31px_232fr_89px_145px_56px] items-center border-t border-white text-sm">
      <span className="flex items-center pl-2.5">
        <svg width="16" height="16" viewBox="0 0 16 16" fill="none" stroke="#888" aria-label="Document saved">
          <path d="M0.5 0.5h15v15h-13l-2-2zM3.5 0.5v5h9v-5M4.5 15v-5h7v5M7.5 12v3" />
        </svg>
      </span>
      <span className={clsx(cell, 'pl-2.5')}>Page 1 of 1</span>
      <span className={clsx(cell, 'pl-2.5')}>253 words, 1,474 characters</span>
      <span className={cell} />
      <span className={clsx(cell, 'pl-2.5')}>Default Page Style</span>
      <span className={clsx(cell, 'justify-center')}>English (USA)</span>
      <span className={cell} />
      <span className={clsx(cell, 'justify-center')}>
        <svg width="28" height="16" viewBox="0 0 28 16" fill="none" aria-label="Standard selection">
          <path d="M0.5 3.5h16v9h-16z" stroke={BLUE} />
          <path d="M21 0.5h7M21 15.5h7M24.5 1v14" stroke="#fff" />
        </svg>
      </span>
      <span className={cell} />
      <span className={clsx(cell, 'justify-center')}>Table1:D3</span>
      <span className={clsx(cell, 'gap-1.5 pl-[9px]')}>
        <button type="button" aria-label="Single-page view">
          <svg width="12" height="16" viewBox="0 0 12 16" fill={SKY}>
            <path d="M0 0h8l4 4v12H0z" />
          </svg>
        </button>
        <button type="button" aria-label="Multiple-page view">
          <svg width="25" height="16" viewBox="0 0 25 16" fill="none" stroke="#fff">
            <path d="M0.5 0.5h7l4 4v11h-11zM7.5 0.5v4h4M13.5 0.5h7l4 4v11h-11zM20.5 0.5v4h4" />
          </svg>
        </button>
        <button type="button" aria-label="Book view">
          <svg width="25" height="16" viewBox="0 0 25 16" fill="none" stroke="#fff">
            <path d="M4.5 0.5h8v15h-12v-11zM4.5 0.5v4h-4M12.5 0.5h8l4 4v11h-12zM20.5 0.5v4h4" />
          </svg>
        </button>
      </span>
      <span className={clsx(cell, 'gap-1.5 pl-2.5')}>
        <button type="button" aria-label="Zoom out" className="h-0.5 w-2 bg-white" />
        <span className="relative flex items-center">
          <span className="absolute left-5 h-1.5 w-0.5 bg-white" />
          <input
            type="range"
            aria-label="Zoom"
            defaultValue={48}
            className="h-3 w-[98px] appearance-none bg-transparent [&::-webkit-slider-runnable-track]:h-0.5 [&::-webkit-slider-runnable-track]:bg-white [&::-webkit-slider-thumb]:-mt-1 [&::-webkit-slider-thumb]:h-2.5 [&::-webkit-slider-thumb]:w-1 [&::-webkit-slider-thumb]:appearance-none [&::-webkit-slider-thumb]:border [&::-webkit-slider-thumb]:border-white [&::-webkit-slider-thumb]:bg-[#555]"
          />
        </span>
        <button type="button" aria-label="Zoom in">
          <svg width="10" height="10" viewBox="0 0 10 10" stroke="#fff" strokeWidth="2">
            <path d="M0 5h10M5 0v10" />
          </svg>
        </button>
      </span>
      <span className={clsx(cell, 'pl-2')}>100%</span>
    </footer>
  );
}

export default function App() {
  return (
    <div className='flex h-screen flex-col overflow-hidden bg-[#1a1a1a] font-["Open_Sans",sans-serif] text-sm text-[#f5f5f5]'>
      <header className="flex h-[29px] shrink-0 items-center bg-[#202122] pl-1">
        <svg width="16" height="20" viewBox="0 0 16 20" className="mr-2" aria-hidden="true">
          <path d="M2 0h7l7 7v11q0 2-2 2H2q-2 0-2-2V2q0-2 2-2z" fill="#1d86d2" />
          <path d="M9 0l7 7H9z" fill="#8fe0fb" />
          <path d="M3 8.5h3M3 11.5h3M3 14.5h7" stroke="#fff" />
          <rect x="7.5" y="8.5" width="5" height="3" fill="#52b7e8" stroke="#fff" />
        </svg>
        <span>Test Document.docx — LibreOffice Writer</span>
        <div className="ml-auto flex">
          <button type="button" aria-label="Minimize" className="flex h-7 w-[58px] items-center justify-center">
            <svg width="12" height="12" stroke="#fff">
              <path d="M0 5.5h12" />
            </svg>
          </button>
          <button type="button" aria-label="Restore" className="flex h-7 w-[58px] items-center justify-center">
            <svg width="12" height="12" stroke="#fff" fill="none">
              <rect x="0.5" y="3" width="8.5" height="8.5" rx="1" />
              <path d="M3 0.5h6q2.500 0 2.500 2.500v6" />
            </svg>
          </button>
          <button type="button" aria-label="Close" className="flex h-7 w-16 items-center justify-center">
            <svg width="12" height="12" stroke="#fff">
              <path d="M0 0l12 12M12 0L0 12" />
            </svg>
          </button>
        </div>
      </header>

      <nav className="flex h-[27px] shrink-0 items-center">
        {menus.map(([pre, key, post]) => (
          <button key={pre + key + post} type="button" className="px-2.5">
            {pre}
            <span className="underline underline-offset-3">{key}</span>
            {post}
          </button>
        ))}
        <button type="button" aria-label="Check for updates" className="ml-auto mr-[7px]">
          <svg width="16" height="16" viewBox="0 0 16 16" fill="none" stroke="#fff">
            <circle cx="7.5" cy="7.5" r="7" />
            <ellipse cx="7.5" cy="7.5" rx="3.5" ry="7" />
            <path d="M1 5h13M1 10h13M7.5 0v15" />
            <path d="M13 8v7M10.5 12.5l2.5 2.500 2.500-2.500" stroke={BLUE} strokeWidth="1.5" />
          </svg>
        </button>
      </nav>

      <div role="toolbar" aria-label="Standard" className="flex h-[38px] shrink-0 items-center pl-1">
        <ToolItems items={standardBar} />
      </div>

      <div role="toolbar" aria-label="Formatting" className="flex h-10 shrink-0 items-center pl-1">
        <Combo label="Paragraph style" value="Table Contents" className="w-[210px]" />
        <ToolItems items={[t('updstyle', 'Update Style'), t('newstyle', 'New Style'), '|']} />
        <Combo label="Font name" value="Liberation Serif" className="w-[230px]" />
        <Combo label="Font size" value="12 pt" className="ml-2 w-[75px]" />
        <ToolItems items={formatBar} />
      </div>

      <main className="flex min-h-0 flex-1">
        <div className="flex min-w-0 flex-1 flex-col">
          <div className="mb-6 grid h-[26px] shrink-0 grid-cols-[1fr_auto_1fr] items-center">
            <span className="ml-2.5 h-1.5 w-1.5 border-b-2 border-l-2 border-white" />
            <Ruler />
          </div>
          <div className="min-h-0 flex-1 overflow-hidden pt-0.5">
            <Page />
          </div>
        </div>
        <div className="flex w-[22px] shrink-0 justify-end bg-[#181818] pr-[7px] pt-[21px]">
          <div className="h-[407px] w-1.5 bg-[#989898]" />
        </div>
        <aside className="flex w-12 shrink-0 border-l border-white">
          <button type="button" aria-label="Hide sidebar" className="flex h-[73px] w-1.5 items-center self-center bg-white">
            <svg width="5" height="8" fill={BG} aria-hidden="true">
              <path d="M0 0l5 4-5 4z" />
            </svg>
          </button>
          <div className="flex flex-1 flex-col items-center gap-[11px] pt-[3px]">
            <button type="button" aria-label="Sidebar settings" className="-mb-[5px]">
              <Icon name="menu" />
            </button>
            {decks.map(([id, label]) => (
              <button key={id} type="button" aria-label={label}>
                <Icon name={id} />
              </button>
            ))}
          </div>
        </aside>
      </main>

      <div role="toolbar" aria-label="Table" className="flex h-[39px] shrink-0 items-center pb-0.5 pl-1">
        <ToolItems items={tableBar} />
      </div>

      <div role="toolbar" aria-label="Find" className="flex h-[39px] shrink-0 items-center pb-px pl-3">
        <button type="button" aria-label="Close find bar">
          <svg width="18" height="18" viewBox="0 0 18 18" aria-hidden="true">
            <circle cx="9" cy="9" r="8.5" fill="#d11f14" stroke={PINK} />
            <path d="M5 5l8 8M13 5l-8 8" stroke={BG} strokeWidth="2" />
          </svg>
        </button>
        <span className="ml-[7px] flex h-7 w-[250px] border border-[#9b9b9b]">
          <input type="text" aria-label="Find text" placeholder="Find" className="min-w-0 flex-1 bg-transparent pl-0.5 outline-none placeholder:text-[#767676]" />
          <button type="button" aria-label="Search history" className="flex w-[21px] items-center justify-center border border-[#9b9b9b] bg-[#333]">
            <ChevronDown size={13} strokeWidth={1.5} />
          </button>
        </span>
        <button type="button" aria-label="Find previous" className="flex w-[33px] justify-center">
          <svg width="20" height="11" fill="none" stroke="#ddd">
            <path d="M1 10.5h18L10 1z" />
          </svg>
        </button>
        <button type="button" aria-label="Find next" className="flex w-[33px] justify-center">
          <svg width="20" height="11" fill="none" stroke="#ddd">
            <path d="M1 0.5h18L10 10z" />
          </svg>
        </button>
        <button type="button" disabled className="ml-[3px] text-[#767676]">Find All</button>
        <label className="ml-2.5 mr-1 flex items-center gap-1">
          <input type="checkbox" className="h-[13px] w-[13px] appearance-none rounded-[3px] border border-[#a0a0a0] bg-[#252525]" />
          Match Case
        </label>
        <Sep />
        <button type="button" aria-label="Find and Replace" className="flex w-9 justify-center">
          <Icon name="find" />
        </button>
        <Sep />
      </div>

      <StatusBar />
    </div>
  );
}
